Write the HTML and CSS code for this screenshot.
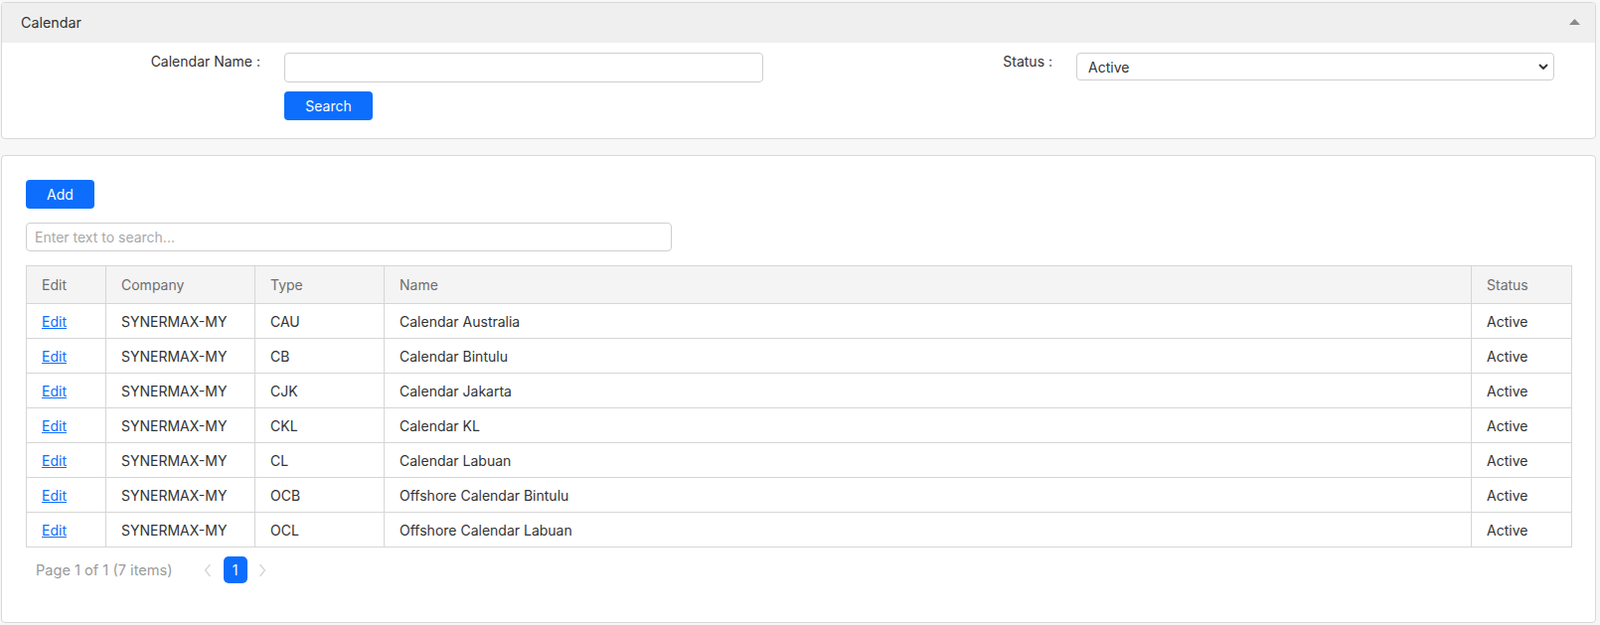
FILE: index.html
```html
<!DOCTYPE html>
<html lang="en">
<head>
<meta charset="utf-8">
<title>Calendar</title>
<link rel="stylesheet" href="styles.css">
</head>
<body>
<div class="page">
  <section class="panel">
    <div class="panel-head">
      <span class="panel-title">Calendar</span>
      <svg class="collapse-icon" width="11" height="6" viewBox="0 0 11 6"><polygon points="5.5,0 11,6 0,6" fill="#8a8a8a"/></svg>
    </div>
    <div class="filter">
      <label class="flabel">Calendar Name :</label>
      <div class="fcol">
        <input class="text-input" type="text">
        <button class="btn btn-search">Search</button>
      </div>
      <label class="flabel">Status :</label>
      <div class="select-wrap">
        <select class="select"><option>Active</option><option>Inactive</option></select>
        <svg class="select-arrow" width="10" height="7" viewBox="0 0 10 7"><polyline points="1.5,1.5 5,5 8.5,1.5" fill="none" stroke="#333" stroke-width="1.8" stroke-linecap="round" stroke-linejoin="round"/></svg>
      </div>
    </div>
  </section>

  <section class="panel list">
    <button class="btn btn-add">Add</button>
    <input class="search" type="text" placeholder="Enter text to search...">
    <table class="grid">
      <colgroup>
        <col class="c-edit"><col class="c-company"><col class="c-type"><col><col class="c-status">
      </colgroup>
      <thead>
        <tr><th>Edit</th><th>Company</th><th>Type</th><th>Name</th><th>Status</th></tr>
      </thead>
      <tbody>
        <tr><td><a href="#">Edit</a></td><td>SYNERMAX-MY</td><td>CAU</td><td>Calendar Australia</td><td>Active</td></tr>
        <tr><td><a href="#">Edit</a></td><td>SYNERMAX-MY</td><td>CB</td><td>Calendar Bintulu</td><td>Active</td></tr>
        <tr><td><a href="#">Edit</a></td><td>SYNERMAX-MY</td><td>CJK</td><td>Calendar Jakarta</td><td>Active</td></tr>
        <tr><td><a href="#">Edit</a></td><td>SYNERMAX-MY</td><td>CKL</td><td>Calendar KL</td><td>Active</td></tr>
        <tr><td><a href="#">Edit</a></td><td>SYNERMAX-MY</td><td>CL</td><td>Calendar Labuan</td><td>Active</td></tr>
        <tr><td><a href="#">Edit</a></td><td>SYNERMAX-MY</td><td>OCB</td><td>Offshore Calendar Bintulu</td><td>Active</td></tr>
        <tr><td><a href="#">Edit</a></td><td>SYNERMAX-MY</td><td>OCL</td><td>Offshore Calendar Labuan</td><td>Active</td></tr>
      </tbody>
    </table>
    <div class="pager">
      <span class="pager-info">Page 1 of 1 (7 items)</span>
      <svg class="chev" width="8" height="14" viewBox="0 0 8 14"><polyline points="6.5,1 1.5,7 6.5,13" fill="none" stroke="#d4d4d4" stroke-width="1.3"/></svg>
      <span class="page-num">1</span>
      <svg class="chev" width="8" height="14" viewBox="0 0 8 14"><polyline points="1.5,1 6.5,7 1.5,13" fill="none" stroke="#d4d4d4" stroke-width="1.3"/></svg>
    </div>
  </section>
</div>
</body>
</html>
```

FILE: styles.css
```css
* { box-sizing: border-box; }

body {
  margin: 0;
  background: #f7f7f7;
  font-family: Inter, "Noto Sans", Roboto, sans-serif;
  font-size: 14px;
  color: #333;
}

.page {
  padding: 2px 4px 0 1px;
}

.panel {
  background: #fff;
  border: 1px solid #d8d8d8;
  border-radius: 4px;
}

.panel-head {
  height: 40px;
  background: #efefef;
  border-radius: 3px 3px 0 0;
  display: flex;
  align-items: center;
  justify-content: space-between;
  padding: 0 15px 2px 19px;
}

.panel-title {
  color: #333;
  font-size: 14.3px;
}

.filter {
  display: grid;
  grid-template-columns: 259px 482px 267px 481px;
  column-gap: 24px;
  padding: 10px 0 18px 1px;
  align-items: start;
}

.flabel {
  text-align: right;
  line-height: 18px;
  color: #333;
}

.fcol {
  display: flex;
  flex-direction: column;
  align-items: flex-start;
}

.text-input {
  width: 482px;
  height: 30px;
  border: 1px solid #cfcfcf;
  border-radius: 4px;
  font: inherit;
  padding: 0 10px;
}

.btn {
  background: #0d6efd;
  color: #fff;
  border: none;
  border-radius: 4px;
  font-family: inherit;
  font-size: 14px;
  cursor: pointer;
  padding: 0;
}

.btn-search {
  width: 89px;
  height: 29px;
  margin-top: 9px;
}

.select-wrap {
  position: relative;
  width: 481px;
}

.select {
  display: block;
  width: 481px;
  height: 28px;
  border: 1px solid #cfcfcf;
  border-radius: 4px;
  background: #fff;
  font: inherit;
  color: #333;
  padding: 0 11px;
  appearance: none;
  -webkit-appearance: none;
}

.select-arrow {
  position: absolute;
  right: 6px;
  top: 11px;
  pointer-events: none;
}

.list {
  margin-top: 16px;
  padding: 24px 23px 39px 24px;
}

.btn-add {
  display: block;
  width: 69px;
  height: 29px;
}

.search {
  display: block;
  width: 650px;
  height: 29px;
  margin-top: 14px;
  border: 1px solid #cfcfcf;
  border-radius: 4px;
  font: inherit;
  font-size: 14px;
  padding: 0 8px;
  color: #333;
}

.search::placeholder {
  color: #a9a9a9;
}

.grid {
  width: 100%;
  margin-top: 14px;
  border-collapse: collapse;
  border: 1px solid #d6d6d6;
}

.c-edit { width: 80px; }
.c-company { width: 150px; }
.c-type { width: 130px; }
.c-status { width: 101px; }

.grid th,
.grid td {
  border: 1px solid #d6d6d6;
  text-align: left;
  padding: 0 15px;
  font-weight: 400;
}

.grid th {
  height: 38px;
  background: #f4f4f4;
  color: #6e6e6e;
}

.grid td {
  height: 35px;
  color: #333;
}

.grid a {
  color: #0d6efd;
  text-decoration: underline;
}

.pager {
  display: flex;
  align-items: center;
  margin-top: 9px;
  padding-left: 10px;
}

.pager-info {
  color: #9a9a9a;
  font-size: 14.6px;
  margin-right: 31px;
}

.page-num {
  display: inline-flex;
  align-items: center;
  justify-content: center;
  width: 24px;
  height: 27px;
  margin: 0 11px 0 12px;
  background: #0d6efd;
  color: #fff;
  border-radius: 5px;
}
```
